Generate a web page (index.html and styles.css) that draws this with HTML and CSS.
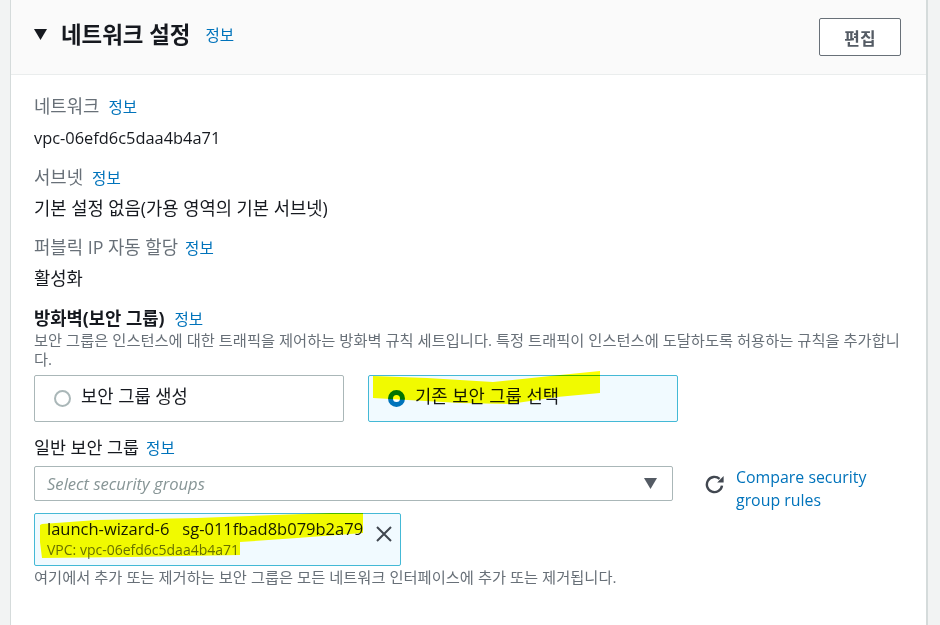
FILE: index.html
```html
<!DOCTYPE html>
<html lang="ko">
<head>
<meta charset="utf-8">
<title>네트워크 설정</title>
<link rel="stylesheet" href="styles.css">
</head>
<body>
<section class="card">
  <header class="card-head">
    <div class="head-title">
      <svg class="caret" viewBox="0 0 12 10" width="13" height="11"><path d="M0 0H12L6 10Z"/></svg>
      <h2>네트워크 설정</h2>
      <a class="info info-head">정보</a>
    </div>
    <button class="edit">편집</button>
  </header>
  <div class="card-body">
    <div class="field">
      <div class="label">네트워크<a class="info">정보</a></div>
      <div class="value value-latin">vpc-06efd6c5daa4b4a71</div>
    </div>
    <div class="field">
      <div class="label">서브넷<a class="info">정보</a></div>
      <div class="value">기본 설정 없음(가용 영역의 기본 서브넷)</div>
    </div>
    <div class="field">
      <div class="label">퍼블릭 IP 자동 할당<a class="info info-tight">정보</a></div>
      <div class="value">활성화</div>
    </div>
    <div class="fw-title">방화벽(보안 그룹)<a class="info">정보</a></div>
    <p class="desc">보안 그룹은 인스턴스에 대한 트래픽을 제어하는 방화벽 규칙 세트입니다. 특정 트래픽이 인스턴스에 도달하도록 허용하는 규칙을 추가합니다.</p>
    <div class="tiles">
      <div class="tile"><span class="radio"></span><span>보안 그룹 생성</span></div>
      <div class="tile tile-on"><span class="radio radio-on"></span><span>기존 보안 그룹 선택</span></div>
    </div>
    <div class="sg-label">일반 보안 그룹<a class="info">정보</a></div>
    <div class="sg-row">
      <div class="select">
        <span>Select security groups</span>
        <svg viewBox="0 0 12 10" width="13" height="11"><path d="M0 0H12L6 10Z"/></svg>
      </div>
      <svg class="refresh" viewBox="0 0 20 20" width="20" height="20"><path d="M17 10.6A7.6 7.6 0 1 1 14.6 3.9"/><path class="refresh-tip" d="M18.6 1V7.4H12.2Z"/></svg>
      <a class="compare">Compare security<br>group rules</a>
    </div>
    <div class="token">
      <div>
        <div class="token-name"><span>launch-wizard-6</span><span>sg-011fbad8b079b2a79</span></div>
        <div class="token-vpc">VPC: vpc-06efd6c5daa4b4a71</div>
      </div>
      <svg class="close" viewBox="0 0 16 16" width="16" height="16"><path d="M1 1L15 15M15 1L1 15"/></svg>
    </div>
    <p class="hint">여기에서 추가 또는 제거하는 보안 그룹은 모든 네트워크 인터페이스에 추가 또는 제거됩니다.</p>
  </div>
  <svg class="marks" viewBox="0 0 940 625" width="940" height="625">
    <path d="M373 376L427 378L493 382L560 375L600 371V393L557 397L510 404L460 403L373 398Z"/>
    <path d="M42 524L97 520L197 518L330 513H363V533L297 538L240 542V555L130 557L42 558L40 542L40 525Z"/>
  </svg>
</section>
</body>
</html>
```
FILE: styles.css
```css
html, body { margin: 0; padding: 0; }
body {
  width: 940px;
  height: 625px;
  overflow: hidden;
  background: #f2f3f3;
  font-family: "Open Sans", "Noto Sans CJK KR", sans-serif;
  color: #16191f;
}
.card {
  margin-left: 10px;
  width: 915px;
  height: 625px;
  background: #fff;
  border-left: 1px solid #d5dbdb;
  border-right: 2px solid #d5dbdb;
  position: relative;
}
.card-head {
  height: 75px;
  box-sizing: border-box;
  background: #fafafa;
  border-bottom: 1px solid #eaeded;
  padding: 18px 25px 0 23px;
  display: flex;
  justify-content: space-between;
  align-items: flex-start;
}
.head-title { display: flex; align-items: center; height: 33px; }
.caret { fill: #16191f; margin-right: 14px; }
h2 { margin: 0; font-size: 22.4px; font-weight: 700; line-height: 33px; }
.info { color: #0073bb; font-size: 15.6px; font-weight: 400; margin-left: 9px; }
.info-head { margin-left: 15px; }
.info-tight { margin-left: 7px; }
.edit {
  width: 82px;
  height: 38px;
  background: #fff;
  border: 1px solid #687078;
  border-radius: 2px;
  color: #545b64;
  font: 700 17px "Open Sans", "Noto Sans CJK KR", sans-serif;
  padding: 0;
}
.card-body { padding: 19px 23px 0; }
.field { margin-bottom: 15px; }
.label { color: #687078; font-size: 17.8px; line-height: 24px; height: 24px; }
.value { font-size: 17.7px; line-height: 24px; margin-top: 7px; height: 24px; }
.value-latin { font-size: 16.4px; margin-top: 8px; }
.fw-title { font-size: 17.7px; font-weight: 700; line-height: 22px; height: 24px; margin-top: 17px; }
.fw-title .info { margin-left: 10px; }
.desc { margin: 0; color: #687078; font-size: 15.3px; line-height: 19px; height: 38px; }
.tiles { display: flex; gap: 24px; margin-top: 6px; }
.tile {
  width: 310px;
  height: 47px;
  box-sizing: border-box;
  border: 1px solid #aab7b8;
  border-radius: 2px;
  display: flex;
  align-items: flex-start;
  padding: 8px 19px;
  gap: 10px;
  font-size: 17.7px;
  line-height: 24px;
}
.tile-on { background: #f1faff; border-color: #44b9d6; }
.radio {
  width: 17px;
  height: 17px;
  box-sizing: border-box;
  border: 2px solid #aab7b8;
  border-radius: 50%;
  background: #fff;
  margin-top: 6px;
  flex: none;
}
.radio-on { border: 5px solid #0073bb; }
.sg-label { font-size: 17.4px; color: #16191f; line-height: 24px; margin-top: 13px; height: 24px; }
.sg-label .info { margin-left: 7px; }
.sg-row { display: flex; align-items: flex-start; margin-top: 7px; }
.select {
  width: 639px;
  height: 35px;
  box-sizing: border-box;
  border: 1px solid #aab7b8;
  border-radius: 2px;
  display: flex;
  justify-content: space-between;
  align-items: center;
  padding: 0 15px 0 12px;
  color: #879596;
  font-style: italic;
  font-size: 16.6px;
}
.select svg { fill: #545b64; }
.refresh { margin: 9px 0 0 32px; fill: none; stroke: #414750; stroke-width: 2.4; flex: none; }
.refresh-tip { fill: #414750; stroke: none; }
.compare { color: #0073bb; font-size: 15.9px; line-height: 23px; margin-left: 11px; }
.token {
  margin-top: 1px;
  width: 367px;
  height: 53px;
  box-sizing: border-box;
  border: 1px solid #44b9d6;
  border-radius: 2px;
  background: #f1faff;
  display: flex;
  justify-content: space-between;
  padding: 3px 8px 0 12px;
}
.token-name { font-size: 16.5px; line-height: 24px; display: flex; gap: 13px; }
.token-vpc { font-size: 14px; line-height: 18px; color: #687078; }
.close { fill: none; stroke: #414750; stroke-width: 2; margin-top: 9px; }
.hint { margin: 2px 0 0; color: #687078; font-size: 15.3px; line-height: 19px; }
.marks { position: absolute; left: -11px; top: 0; fill: #ffff00; mix-blend-mode: multiply; pointer-events: none; }
```
